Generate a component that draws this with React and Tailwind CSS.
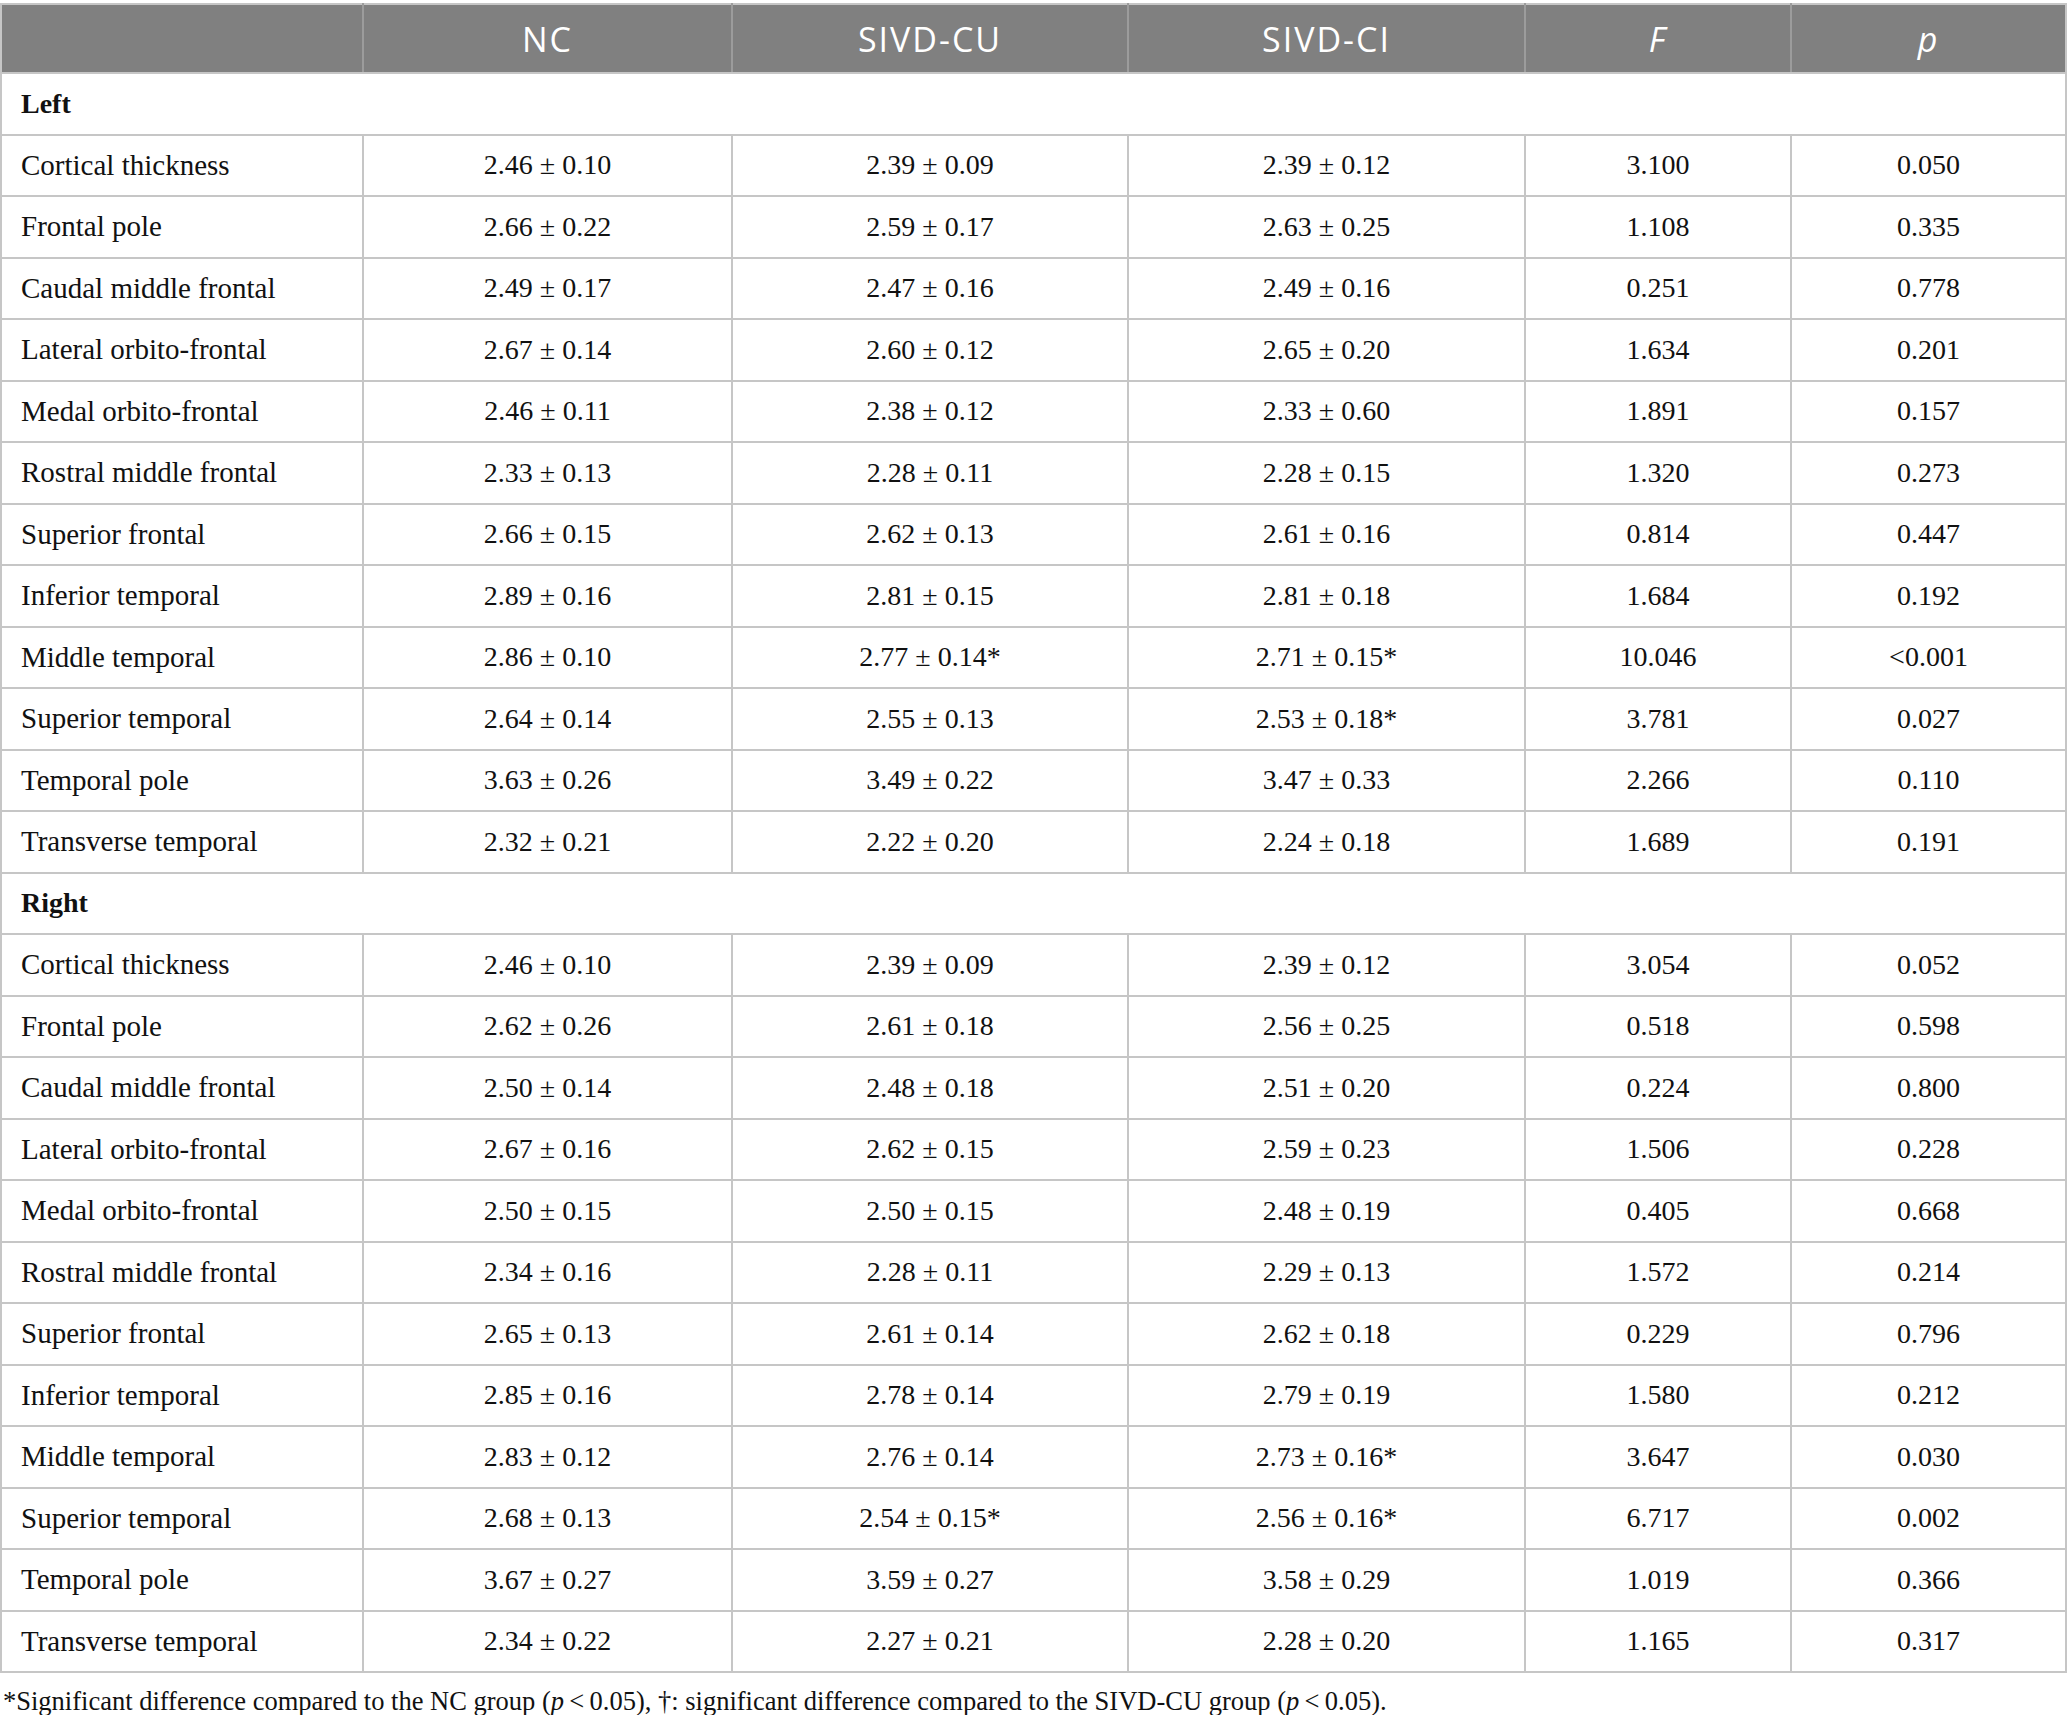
import React from 'react';

const left = [
  ['Cortical thickness', '2.46 ± 0.10', '2.39 ± 0.09', '2.39 ± 0.12', '3.100', '0.050'],
  ['Frontal pole', '2.66 ± 0.22', '2.59 ± 0.17', '2.63 ± 0.25', '1.108', '0.335'],
  ['Caudal middle frontal', '2.49 ± 0.17', '2.47 ± 0.16', '2.49 ± 0.16', '0.251', '0.778'],
  ['Lateral orbito-frontal', '2.67 ± 0.14', '2.60 ± 0.12', '2.65 ± 0.20', '1.634', '0.201'],
  ['Medal orbito-frontal', '2.46 ± 0.11', '2.38 ± 0.12', '2.33 ± 0.60', '1.891', '0.157'],
  ['Rostral middle frontal', '2.33 ± 0.13', '2.28 ± 0.11', '2.28 ± 0.15', '1.320', '0.273'],
  ['Superior frontal', '2.66 ± 0.15', '2.62 ± 0.13', '2.61 ± 0.16', '0.814', '0.447'],
  ['Inferior temporal', '2.89 ± 0.16', '2.81 ± 0.15', '2.81 ± 0.18', '1.684', '0.192'],
  ['Middle temporal', '2.86 ± 0.10', '2.77 ± 0.14*', '2.71 ± 0.15*', '10.046', '<0.001'],
  ['Superior temporal', '2.64 ± 0.14', '2.55 ± 0.13', '2.53 ± 0.18*', '3.781', '0.027'],
  ['Temporal pole', '3.63 ± 0.26', '3.49 ± 0.22', '3.47 ± 0.33', '2.266', '0.110'],
  ['Transverse temporal', '2.32 ± 0.21', '2.22 ± 0.20', '2.24 ± 0.18', '1.689', '0.191'],
];

const right = [
  ['Cortical thickness', '2.46 ± 0.10', '2.39 ± 0.09', '2.39 ± 0.12', '3.054', '0.052'],
  ['Frontal pole', '2.62 ± 0.26', '2.61 ± 0.18', '2.56 ± 0.25', '0.518', '0.598'],
  ['Caudal middle frontal', '2.50 ± 0.14', '2.48 ± 0.18', '2.51 ± 0.20', '0.224', '0.800'],
  ['Lateral orbito-frontal', '2.67 ± 0.16', '2.62 ± 0.15', '2.59 ± 0.23', '1.506', '0.228'],
  ['Medal orbito-frontal', '2.50 ± 0.15', '2.50 ± 0.15', '2.48 ± 0.19', '0.405', '0.668'],
  ['Rostral middle frontal', '2.34 ± 0.16', '2.28 ± 0.11', '2.29 ± 0.13', '1.572', '0.214'],
  ['Superior frontal', '2.65 ± 0.13', '2.61 ± 0.14', '2.62 ± 0.18', '0.229', '0.796'],
  ['Inferior temporal', '2.85 ± 0.16', '2.78 ± 0.14', '2.79 ± 0.19', '1.580', '0.212'],
  ['Middle temporal', '2.83 ± 0.12', '2.76 ± 0.14', '2.73 ± 0.16*', '3.647', '0.030'],
  ['Superior temporal', '2.68 ± 0.13', '2.54 ± 0.15*', '2.56 ± 0.16*', '6.717', '0.002'],
  ['Temporal pole', '3.67 ± 0.27', '3.59 ± 0.27', '3.58 ± 0.29', '1.019', '0.366'],
  ['Transverse temporal', '2.34 ± 0.22', '2.27 ± 0.21', '2.28 ± 0.20', '1.165', '0.317'],
];

const serif = { fontFamily: '"Liberation Serif", "Times New Roman", serif' };

function Section({ title, rows }) {
  return (
    <>
      <tr className="h-[61.5px]">
        <td colSpan={6} className="border-2 border-[#c6c6c6] pl-[19px] font-bold">{title}</td>
      </tr>
      {rows.map((r) => (
        <tr key={title + r[0]} className="h-[61.5px]">
          {r.map((c, i) => (
            <td key={i} className={`border-2 border-[#c6c6c6] ${i === 0 ? 'pl-[19px] text-left text-[29px]' : 'text-center'}`}>{c}</td>
          ))}
        </tr>
      ))}
    </>
  );
}

export default function App() {
  return (
    <div className="w-[2067px] bg-white pt-[3px] text-[#111]" style={serif}>
      <table className="w-[2067px] table-fixed border-collapse text-[28px] leading-none">
        <colgroup>
          <col className="w-[362px]" />
          <col className="w-[369px]" />
          <col className="w-[396px]" />
          <col className="w-[397px]" />
          <col className="w-[266px]" />
          <col />
        </colgroup>
        <thead>
          <tr className="h-[69px] bg-[#808080] text-white text-[34px] tracking-[2px] font-normal" style={{ fontFamily: '"Open Sans", sans-serif' }}>
            <th className="border-2 border-[#c6c6c6] border-r-[#9c9c9c]"></th>
            <th className="border-2 border-[#c6c6c6] border-x-[#9c9c9c] font-normal">NC</th>
            <th className="border-2 border-[#c6c6c6] border-x-[#9c9c9c] font-normal">SIVD-CU</th>
            <th className="border-2 border-[#c6c6c6] border-x-[#9c9c9c] font-normal">SIVD-CI</th>
            <th className="border-2 border-[#c6c6c6] border-x-[#9c9c9c] font-normal italic">F</th>
            <th className="border-2 border-[#c6c6c6] border-l-[#9c9c9c] font-normal italic">p</th>
          </tr>
        </thead>
        <tbody>
          <Section title="Left" rows={left} />
          <Section title="Right" rows={right} />
        </tbody>
      </table>
      <p className="mt-[15px] pl-[3px] text-[26.5px] leading-none">
        *Significant difference compared to the NC group (<i>p</i>&thinsp;&lt;&thinsp;0.05), †: significant difference compared to the SIVD-CU group (<i>p</i>&thinsp;&lt;&thinsp;0.05).
      </p>
    </div>
  );
}
